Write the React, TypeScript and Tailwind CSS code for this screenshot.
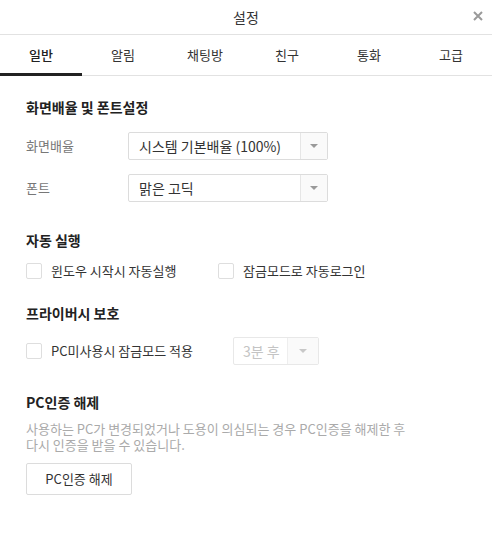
import React from "react";

const font = { fontFamily: '"Noto Sans CJK KR", "Noto Sans", sans-serif' };

function Arrow({ color = "#9a9a9a" }: { color?: string }) {
  return (
    <svg width="8" height="4" viewBox="0 0 8 4">
      <polygon points="0,0 8,0 4,4" fill={color} />
    </svg>
  );
}

function Select({ value }: { value: string }) {
  return (
    <div className="flex h-[28px] w-[200px] items-stretch rounded-[2px] border border-[#dcdcdc] bg-white">
      <div className="flex flex-1 items-center pl-[10px] text-[14px] text-[#333]">{value}</div>
      <div className="flex w-[27px] items-center justify-center border-l border-[#e6e6e6] bg-[#fafafa]">
        <Arrow />
      </div>
    </div>
  );
}

function Checkbox({ label }: { label: string }) {
  return (
    <div className="flex items-center">
      <div className="h-[16px] w-[16px] rounded-[2px] border border-[#dedede] bg-white" />
      <span className="ml-[9px] text-[13px] leading-[16px] text-[#333]">{label}</span>
    </div>
  );
}

function SectionTitle({ children }: { children: React.ReactNode }) {
  return <div className="text-[14px] font-bold leading-[18px] text-[#222]">{children}</div>;
}

export default function App() {
  const tabs = ["일반", "알림", "채팅방", "친구", "통화", "고급"];
  return (
    <div className="h-[556px] w-[492px] bg-white" style={font}>
      <div className="relative flex h-[35px] items-center justify-center border-b border-[#e2e2e2]">
        <span className="text-[14px] text-[#333]">설정</span>
        <span className="absolute right-[7px] top-[9px] flex h-[14px] w-[14px] items-center justify-center">
          <svg width="10" height="10" viewBox="0 0 10 10">
            <path d="M1 1 L9 9 M9 1 L1 9" stroke="#9a9a9a" strokeWidth="2" />
          </svg>
        </span>
      </div>
      <div className="grid h-[41px] grid-cols-6 border-b border-[#e2e2e2]">
        {tabs.map((t, i) => (
          <div
            key={t}
            className={
              i === 0
                ? "-mb-px flex h-[41px] items-center justify-center border-b-[3px] border-[#222] pt-[2px] text-[13px] font-medium text-[#222]"
                : "-mb-px flex h-[41px] items-center justify-center border-b-[3px] border-transparent pt-[2px] text-[13px] text-[#333]"
            }
          >
            {t}
          </div>
        ))}
      </div>
      <div className="px-[26px] pt-[22px]">
        <SectionTitle>화면배율 및 폰트설정</SectionTitle>
        <div className="mt-[16px] flex items-center">
          <span className="w-[102px] text-[13px] text-[#777]">화면배율</span>
          <Select value="시스템 기본배율 (100%)" />
        </div>
        <div className="mt-[14px] flex items-center">
          <span className="w-[102px] text-[13px] text-[#777]">폰트</span>
          <Select value="맑은 고딕" />
        </div>

        <div className="mt-[29px]">
          <SectionTitle>자동 실행</SectionTitle>
        </div>
        <div className="mt-[14px] flex items-center">
          <div className="w-[192px]">
            <Checkbox label="윈도우 시작시 자동실행" />
          </div>
          <Checkbox label="잠금모드로 자동로그인" />
        </div>

        <div className="mt-[25px]">
          <SectionTitle>프라이버시 보호</SectionTitle>
        </div>
        <div className="mt-[15px] flex items-center">
          <div className="w-[207px]">
            <Checkbox label="PC미사용시 잠금모드 적용" />
          </div>
          <div className="flex h-[28px] w-[86px] items-stretch rounded-[2px] border border-[#e8e8e8] bg-white">
            <div className="flex flex-1 items-center pl-[9px] text-[14px] text-[#c4c4c4]">3분 후</div>
            <div className="flex w-[31px] items-center justify-center border-l border-[#eeeeee] bg-[#fafafa]">
              <Arrow color="#c8c8c8" />
            </div>
          </div>
        </div>

        <div className="mt-[28px]">
          <SectionTitle>PC인증 해제</SectionTitle>
        </div>
        <div className="mt-[10px] text-[13px] leading-[16px] text-[#aaa]">
          <div>사용하는 PC가 변경되었거나 도용이 의심되는 경우 PC인증을 해제한 후</div>
          <div>다시 인증을 받을 수 있습니다.</div>
        </div>
        <button className="mt-[10px] flex h-[32px] w-[106px] items-center justify-center rounded-[2px] border border-[#dcdcdc] bg-white text-[13px] text-[#333]">
          PC인증 해제
        </button>
      </div>
    </div>
  );
}
